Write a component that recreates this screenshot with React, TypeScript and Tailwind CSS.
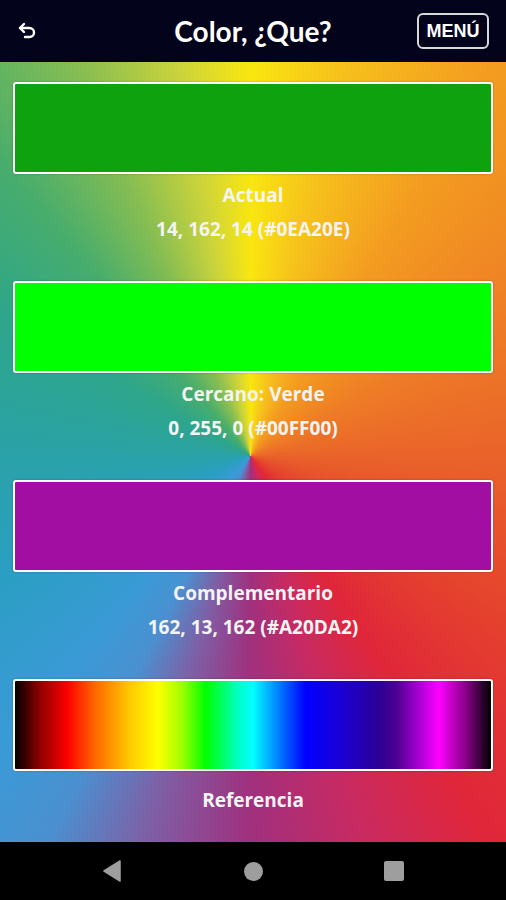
import React from "react";

const sections = [
  { color: "#0EA20E", label: "Actual", value: "14, 162, 14 (#0EA20E)" },
  { color: "#00FF00", label: "Cercano: Verde", value: "0, 255, 0 (#00FF00)" },
  { color: "#A20DA2", label: "Complementario", value: "162, 13, 162 (#A20DA2)" },
];

const bg =
  "conic-gradient(from 0deg at 49.5% 50.5%, #f9e60f 0deg, #f6c41b 12deg, #f39c20 32deg, #ee7c26 62deg, #e9612a 92deg, #e5432d 122deg, #e0263a 148deg, #c82a62 164deg, #a0307e 180deg, #7c62a8 196deg, #4a90d0 208deg, #3a9ad6 220deg, #2a9fc2 245deg, #2aa2a6 272deg, #2ea68a 300deg, #48ad6c 320deg, #86bd52 336deg, #cdd43a 350deg, #f9e60f 360deg)";

const spectrum =
  "linear-gradient(to right, #000000 0%, #8a0000 5%, #ff0000 11%, #ff6a00 17%, #ffc800 24%, #ffff00 30%, #a0ff00 35%, #00ff00 40%, #00ffc8 47%, #00ffff 50%, #0070ff 56%, #0000ff 61%, #1a00d8 68%, #2a0098 76%, #4a0090 80%, #c000e0 86%, #ff00ff 89%, #800080 95%, #000000 100%)";

export default function App() {
  return (
    <div
      className="w-[506px] h-[900px] flex flex-col overflow-hidden"
      style={{ fontFamily: '"Open Sans", "Noto Sans", sans-serif' }}
    >
      <header className="h-[62px] bg-[#03031b] flex items-center justify-between px-[16px] relative shrink-0">
        <svg width="22" height="20" viewBox="0 0 22 20" fill="none" stroke="#ffffff" strokeWidth="2.4" strokeLinecap="round" strokeLinejoin="round" className="ml-[1px]">
          <path d="M7 3 3 7l4 4" />
          <path d="M3 7h9.5a4.5 4.5 0 0 1 0 9H8" />
        </svg>
        <div
          className="absolute left-0 right-0 text-center text-white text-[28px] font-bold pointer-events-none"
          style={{ fontFamily: '"Lato", "Noto Sans", sans-serif' }}
        >
          Color, ¿Que?
        </div>
        <div
          className="w-[72px] h-[36px] border-2 border-[#d8d8d8] rounded-[6px] flex items-center justify-center text-white text-[18px] font-bold mr-[1px]"
          style={{ fontFamily: '"Liberation Sans", Arial, sans-serif' }}
        >
          MENÚ
        </div>
      </header>
      <main className="flex-1 flex flex-col px-[13px] pt-[20px]" style={{ background: bg }}>
        {sections.map((s, i) => (
          <div key={i} className="flex flex-col items-center mb-[39px]">
            <div
              className="w-full h-[92px] border-2 border-white rounded-[3px] shadow-[0_0_2px_rgba(0,0,0,0.3)]"
              style={{ backgroundColor: s.color }}
            />
            <div className="text-[#f4f4f4] text-[19px] font-bold leading-[26px] mt-[8px]">{s.label}</div>
            <div className="text-[#f4f4f4] text-[19px] font-bold leading-[26px] mt-[8px]">{s.value}</div>
          </div>
        ))}
        <div className="flex flex-col items-center">
          <div
            className="w-full h-[92px] border-2 border-white rounded-[3px] shadow-[0_0_2px_rgba(0,0,0,0.3)]"
            style={{ background: spectrum }}
          />
          <div className="text-[#f4f4f4] text-[19px] font-bold leading-[26px] mt-[16px]">Referencia</div>
        </div>
      </main>
      <nav className="h-[58px] bg-black flex items-center justify-center gap-[121px] shrink-0">
        <svg width="20" height="22" viewBox="0 0 20 22" className="mr-[1px]">
          <path d="M18 1 L2 11 L18 21 Z" fill="#9e9e9e" stroke="#9e9e9e" strokeWidth="1.5" strokeLinejoin="round" />
        </svg>
        <div className="w-[19px] h-[19px] rounded-full bg-[#9e9e9e]" />
        <div className="w-[20px] h-[20px] rounded-[2px] bg-[#9e9e9e]" />
      </nav>
    </div>
  );
}
